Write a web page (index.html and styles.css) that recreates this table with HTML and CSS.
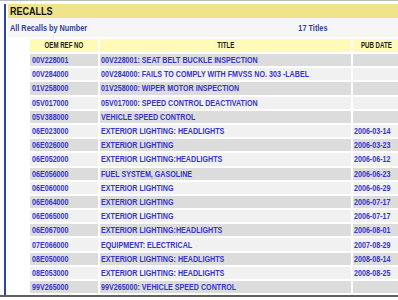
FILE: index.html
```html
<!DOCTYPE html>
<html>
<head>
<meta charset="utf-8">
<link rel="stylesheet" href="styles.css">
</head>
<body>
<div class="top-rule"></div>
<div class="frame">
  <div class="band"><span class="tx">RECALLS</span></div>
  <div class="sub"><span class="sub-title"><span class="tx">All Recalls by Number</span></span><span class="count"><span class="tx mid">17 Titles</span></span></div>
  <table class="recalls">
    <colgroup><col class="col-ref"><col class="col-title"><col class="col-date"></colgroup>
    <thead>
      <tr><th><span class="tx mid">OEM REF NO</span></th><th><span class="tx mid">TITLE</span></th><th><span class="tx mid">PUB DATE</span></th></tr>
    </thead>
    <tbody>
      <tr class="dark"><td><span class="tx">00V228001</span></td><td><span class="tx">00V228001: SEAT BELT BUCKLE INSPECTION</span></td><td></td></tr>
      <tr class="light"><td><span class="tx">00V284000</span></td><td><span class="tx">00V284000: FAILS TO COMPLY WITH FMVSS NO. 303 -LABEL</span></td><td></td></tr>
      <tr class="dark"><td><span class="tx">01V258000</span></td><td><span class="tx">01V258000: WIPER MOTOR INSPECTION</span></td><td></td></tr>
      <tr class="light"><td><span class="tx">05V017000</span></td><td><span class="tx">05V017000: SPEED CONTROL DEACTIVATION</span></td><td></td></tr>
      <tr class="dark"><td><span class="tx">05V388000</span></td><td><span class="tx">VEHICLE SPEED CONTROL</span></td><td></td></tr>
      <tr class="light"><td><span class="tx">06E023000</span></td><td><span class="tx">EXTERIOR LIGHTING: HEADLIGHTS</span></td><td><span class="tx">2006-03-14</span></td></tr>
      <tr class="dark"><td><span class="tx">06E026000</span></td><td><span class="tx">EXTERIOR LIGHTING</span></td><td><span class="tx">2006-03-23</span></td></tr>
      <tr class="light"><td><span class="tx">06E052000</span></td><td><span class="tx">EXTERIOR LIGHTING:HEADLIGHTS</span></td><td><span class="tx">2006-06-12</span></td></tr>
      <tr class="dark"><td><span class="tx">06E056000</span></td><td><span class="tx">FUEL SYSTEM, GASOLINE</span></td><td><span class="tx">2006-06-23</span></td></tr>
      <tr class="light"><td><span class="tx">06E060000</span></td><td><span class="tx">EXTERIOR LIGHTING</span></td><td><span class="tx">2006-06-29</span></td></tr>
      <tr class="dark"><td><span class="tx">06E064000</span></td><td><span class="tx">EXTERIOR LIGHTING</span></td><td><span class="tx">2006-07-17</span></td></tr>
      <tr class="light"><td><span class="tx">06E065000</span></td><td><span class="tx">EXTERIOR LIGHTING</span></td><td><span class="tx">2006-07-17</span></td></tr>
      <tr class="dark"><td><span class="tx">06E067000</span></td><td><span class="tx">EXTERIOR LIGHTING:HEADLIGHTS</span></td><td><span class="tx">2006-08-01</span></td></tr>
      <tr class="light"><td><span class="tx">07E066000</span></td><td><span class="tx">EQUIPMENT: ELECTRICAL</span></td><td><span class="tx">2007-08-29</span></td></tr>
      <tr class="dark"><td><span class="tx">08E050000</span></td><td><span class="tx">EXTERIOR LIGHTING: HEADLIGHTS</span></td><td><span class="tx">2008-08-14</span></td></tr>
      <tr class="light"><td><span class="tx">08E053000</span></td><td><span class="tx">EXTERIOR LIGHTING: HEADLIGHTS</span></td><td><span class="tx">2008-08-25</span></td></tr>
      <tr class="dark"><td><span class="tx">99V265000</span></td><td><span class="tx">99V265000: VEHICLE SPEED CONTROL</span></td><td></td></tr>
    </tbody>
  </table>
</div>
<div class="bottom-rule"></div>
</body>
</html>
```

FILE: styles.css
```css
html, body {
  margin: 0;
  padding: 0;
  overflow: hidden;
  background: #ffffff;
}

body {
  width: 398px;
  height: 300px;
  font-family: "Liberation Sans Narrow", "Liberation Sans", Arial, sans-serif;
  font-weight: bold;
}

.tx {
  display: inline-block;
  transform: scaleX(0.86);
  transform-origin: left center;
}

.tx.mid {
  transform-origin: center center;
}

.top-rule {
  height: 1px;
  background: #b9b9b9;
  margin-bottom: 2px;
}

.frame {
  margin-left: 4px;
  border-left: 2px solid #2c46a2;
  padding-left: 2px;
}

.band {
  margin-top: 3px;
  height: 14px;
  line-height: 15px;
  background: #efe48c;
  color: #111111;
  font-size: 10.5px;
  padding-left: 2px;
}

.sub {
  display: flex;
  height: 19px;
  line-height: 21px;
  background: #f6f6f6;
  color: #2e3f96;
  font-size: 8.5px;
  padding-left: 2px;
}

.sub-title {
  flex: 1;
}

.count {
  width: 170px;
  text-align: center;
}

.recalls {
  margin-left: 20px;
  width: 374px;
  table-layout: fixed;
  border-collapse: separate;
  border-spacing: 2px;
  font-size: 8.3px;
}

.col-ref { width: 68px; }
.col-title { width: 251px; }
.col-date { width: 47px; }

.recalls th {
  height: 12px;
  padding: 0;
  line-height: 13px;
  background: #fffbb6;
  color: #1c1c1c;
  font-size: 8.5px;
  font-weight: bold;
  text-align: center;
  white-space: nowrap;
}

.recalls th .tx {
  transform: scaleX(0.72);
}

.recalls td {
  height: 12.2px;
  padding: 0 0 0 2px;
  line-height: 12px;
  color: #3535c9;
  white-space: nowrap;
  overflow: hidden;
}

.recalls td + td {
  padding-left: 1px;
}

.dark td { background: #dcdcdc; }
.light td { background: #f1f1f1; }

.bottom-rule {
  height: 2px;
  background: #5f5f5f;
}
```
